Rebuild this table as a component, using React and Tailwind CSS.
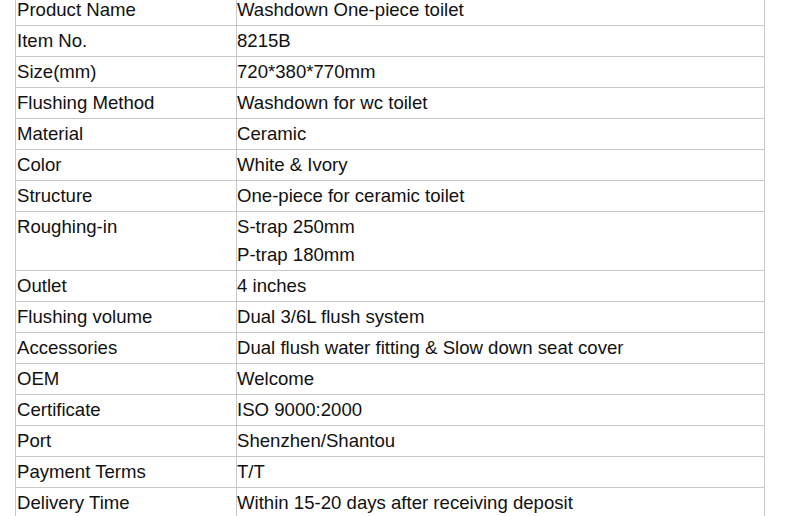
import React from 'react';

const ROWS = [
  ['Product Name', ['Washdown One-piece toilet']],
  ['Item No.', ['8215B']],
  ['Size(mm)', ['720*380*770mm']],
  ['Flushing Method', ['Washdown for wc toilet']],
  ['Material', ['Ceramic']],
  ['Color', ['White & Ivory']],
  ['Structure', ['One-piece for ceramic toilet']],
  ['Roughing-in', ['S-trap 250mm', 'P-trap 180mm']],
  ['Outlet', ['4 inches']],
  ['Flushing volume', ['Dual 3/6L flush system']],
  ['Accessories', ['Dual flush water fitting & Slow down seat cover']],
  ['OEM', ['Welcome']],
  ['Certificate', ['ISO 9000:2000']],
  ['Port', ['Shenzhen/Shantou']],
  ['Payment Terms', ['T/T']],
  ['Delivery Time', ['Within 15-20 days after receiving deposit']],
];

export default function App() {
  return (
    <div className="h-[516px] overflow-hidden bg-white font-['Liberation_Sans',Arial,sans-serif] text-[18.6px] text-[#111]">
      <table className="ml-[15px] -mt-[6px] w-[750px] border-collapse border border-[#c8c8c8]">
        <tbody>
          {ROWS.map(([label, values]) => (
            <tr key={label}>
              <td className="w-[221px] border border-[#c8c8c8] align-top pl-[1px] py-[1px] leading-[28px]">
                {label}
              </td>
              <td className="border border-[#c8c8c8] align-top pl-0 py-[1px] leading-[28px]">
                {values.map((v) => (
                  <div key={v}>{v}</div>
                ))}
              </td>
            </tr>
          ))}
        </tbody>
      </table>
    </div>
  );
}
